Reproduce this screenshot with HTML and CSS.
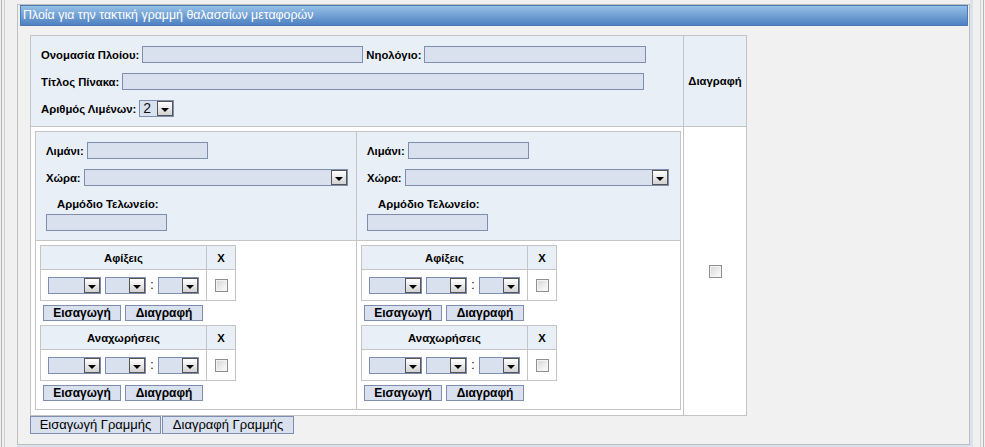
FILE: index.html
```html
<!DOCTYPE html>
<html lang="el">
<head>
  <meta charset="UTF-8" />
  <title>Πλοία τακτικής γραμμής</title>
  <link rel="stylesheet" href="styles.css">
</head>
<body>
  <div class="shell">
    <div class="shell-in">
      <div class="panel-wrap">
        <div class="panel">
          <!-- Title bar -->
          <div class="panel-title">Πλοία για την τακτική γραμμή θαλασσίων μεταφορών</div>

          <div class="panel-body">
            <table class="grid main">
              <colgroup><col class="c-form"><col class="c-del"></colgroup>
              <tr>
                <td class="form-head">
                  <div class="line">
                    <label>Ονομασία Πλοίου:</label><input class="field w-name" type="text">
                    <label class="next">Νηολόγιο:</label><input class="field w-reg" type="text">
                  </div>
                  <div class="line">
                    <label>Τίτλος Πίνακα:</label><input class="field w-title" type="text">
                  </div>
                  <div class="line">
                    <label>Αριθμός Λιμένων:</label><span class="sel w-count"><span class="val">2</span><span class="arr"></span></span>
                  </div>
                </td>
                <td class="del-head">Διαγραφή</td>
              </tr>
              <tr>
                <td class="ports-cell">
                  <table class="grid ports">
                    <colgroup><col class="c-port1"><col class="c-port2"></colgroup>
                    <tr>
                      <td class="port-info">
                        <div class="line"><label>Λιμάνι:</label><input class="field w-port" type="text"></div>
                        <div class="line"><label>Χώρα:</label><span class="sel w-country"><span class="val"></span><span class="arr"></span></span></div>
                        <div class="office">Αρμόδιο Τελωνείο:</div>
                        <input class="field w-office" type="text">
                      </td>
                      <td class="port-info">
                        <div class="line"><label>Λιμάνι:</label><input class="field w-port" type="text"></div>
                        <div class="line"><label>Χώρα:</label><span class="sel w-country"><span class="val"></span><span class="arr"></span></span></div>
                        <div class="office">Αρμόδιο Τελωνείο:</div>
                        <input class="field w-office" type="text">
                      </td>
                    </tr>
                    <tr>
                      <td class="port-times">
                        <table class="grid times">
                          <colgroup><col class="c-time"><col class="c-x"></colgroup>
                          <tr><td class="th">Αφίξεις</td><td class="th">X</td></tr>
                          <tr>
                            <td><div class="clock"><span class="sel w-day"><span class="val"></span><span class="arr"></span></span><span class="sel w-hm"><span class="val"></span><span class="arr"></span></span><span class="colon">:</span><span class="sel w-hm"><span class="val"></span><span class="arr"></span></span></div></td>
                            <td class="center"><span class="check"></span></td>
                          </tr>
                        </table>
                        <div class="btns"><button>Εισαγωγή</button><button>Διαγραφή</button></div>
                        <table class="grid times">
                          <colgroup><col class="c-time"><col class="c-x"></colgroup>
                          <tr><td class="th">Αναχωρήσεις</td><td class="th">X</td></tr>
                          <tr>
                            <td><div class="clock"><span class="sel w-day"><span class="val"></span><span class="arr"></span></span><span class="sel w-hm"><span class="val"></span><span class="arr"></span></span><span class="colon">:</span><span class="sel w-hm"><span class="val"></span><span class="arr"></span></span></div></td>
                            <td class="center"><span class="check"></span></td>
                          </tr>
                        </table>
                        <div class="btns"><button>Εισαγωγή</button><button>Διαγραφή</button></div>
                      </td>
                      <td class="port-times">
                        <table class="grid times">
                          <colgroup><col class="c-time"><col class="c-x"></colgroup>
                          <tr><td class="th">Αφίξεις</td><td class="th">X</td></tr>
                          <tr>
                            <td><div class="clock"><span class="sel w-day"><span class="val"></span><span class="arr"></span></span><span class="sel w-hm"><span class="val"></span><span class="arr"></span></span><span class="colon">:</span><span class="sel w-hm"><span class="val"></span><span class="arr"></span></span></div></td>
                            <td class="center"><span class="check"></span></td>
                          </tr>
                        </table>
                        <div class="btns"><button>Εισαγωγή</button><button>Διαγραφή</button></div>
                        <table class="grid times">
                          <colgroup><col class="c-time"><col class="c-x"></colgroup>
                          <tr><td class="th">Αναχωρήσεις</td><td class="th">X</td></tr>
                          <tr>
                            <td><div class="clock"><span class="sel w-day"><span class="val"></span><span class="arr"></span></span><span class="sel w-hm"><span class="val"></span><span class="arr"></span></span><span class="colon">:</span><span class="sel w-hm"><span class="val"></span><span class="arr"></span></span></div></td>
                            <td class="center"><span class="check"></span></td>
                          </tr>
                        </table>
                        <div class="btns"><button>Εισαγωγή</button><button>Διαγραφή</button></div>
                      </td>
                    </tr>
                  </table>
                </td>
                <td class="center"><span class="check"></span></td>
              </tr>
            </table>

            <!-- Row actions -->
            <div class="row-btns">
              <button class="wide">Εισαγωγή Γραμμής</button><button class="wide w2">Διαγραφή Γραμμής</button>
            </div>
          </div>
        </div>
      </div>
    </div>
  </div>
</body>
</html>
```

FILE: styles.css
```css
* { box-sizing: border-box; margin: 0; padding: 0; }
body {
  background: #f0f0f0;
  font-family: "Liberation Sans", Arial, sans-serif;
  font-size: 11.3px; color: #000;
  height: 447px; overflow: hidden;
}

/* —— page frame —— */
.shell {
  margin: 0 1px; height: 447px;
  border-left: 1px solid #b4b4b4; border-right: 1px solid #b4b4b4;
  padding: 0 2px;
}
.shell-in {
  height: 100%;
  border-left: 1px solid #cfcfcf; border-right: 1px solid #cfcfcf;
  padding-left: 12px;
}
.panel-wrap {
  width: 956px; padding-top: 4px;
  border-right: 3px solid #dbe2ee; border-bottom: 3px solid #dbe2ee;
}
.panel {
  height: 441px;
  border: 1px solid #bebebe;
  background: #f1f1f1;
}
.panel-title {
  margin: 0 1px 0 2px; height: 21px;
  border: 1px solid #4b79b6;
  background: linear-gradient(to bottom, #95c1e7, #4f80c1);
  color: #fff; font-size: 12.4px; line-height: 19px;
  padding-left: 2px;
}
.panel-body { padding: 9px 0 0 12px; }

/* —— tables —— */
.grid { border-collapse: collapse; table-layout: fixed; }
.grid td { border: 1px solid #c4c4c4; vertical-align: top; }
.main { width: 716px; }
.c-form { width: 653px; }
.c-del { width: 63px; }
.ports { width: 645px; }
.c-port1 { width: 321px; }
.c-port2 { width: 324px; }
.times { width: 195px; }
.c-time { width: 166px; }
.c-x { width: 29px; }

.form-head {
  background: #e9eff7;
  padding: 10px 10px 9px 10px;
}
.del-head {
  background: #e9eff7;
  font-weight: bold; text-align: center;
}
.grid td.del-head, .grid td.center { vertical-align: middle; text-align: center; }

.line { display: flex; align-items: center; height: 17px; }
.line + .line { margin-top: 10px; }
label { font-weight: bold; margin-right: 3px; white-space: nowrap; }
label.next { margin-left: 3px; }

/* —— fields —— */
.field {
  display: block; height: 17px;
  border: 1px solid #7f8eb0; background: #d9e0ee;
  outline: none;
}
.w-name { width: 221px; }
.w-reg { width: 222px; }
.w-title { width: 522px; }
.w-port { width: 121px; }
.w-office { width: 121px; margin-top: 3px; }

.sel {
  display: flex; height: 17px;
  border: 1px solid #7f8eb0; background: #d9e0ee;
}
.sel .val { flex: 1; font-size: 14px; line-height: 15px; padding-left: 3px; color: #111; }
.sel .arr {
  width: 16px; position: relative;
  border: 1px solid #555;
  background: linear-gradient(to bottom, #ffffff, #d2d2d2);
}
.sel .arr::after {
  content: ""; position: absolute;
  left: 3px; bottom: 3px;
  border-left: 4px solid transparent; border-right: 4px solid transparent;
  border-top: 4px solid #000;
}
.w-count { width: 35px; }
.w-country { width: 264px; }
.w-day { width: 53px; }
.w-hm { width: 41px; }

/* —— ports —— */
.grid td.port-info {
  background: #e9eff7;
  padding: 10px 0 9px 10px;
}
.office {
  font-weight: bold; height: 14px; line-height: 14px;
  margin-top: 11px; padding-left: 11px;
}
.grid td.port-times { background: #fff; padding: 4px 0 4px 4px; }
.grid td.ports-cell { padding: 4px 3px 5px 4px; background: #fff; }
.grid td.center { background: #fff; }

.times td { background: #fff; }
.grid td.th {
  background: #e9eff7; height: 24px;
  font-weight: bold; text-align: center; vertical-align: middle;
}
.clock {
  display: flex; align-items: center; justify-content: center;
  gap: 4px; height: 30px;
}
.colon { width: 4px; text-align: center; font-size: 12px; }

.check {
  display: inline-block; width: 13px; height: 13px; vertical-align: middle;
  border: 1px solid #8e8f8f;
  background: linear-gradient(135deg, #d5d5d5, #ffffff);
  box-shadow: inset 0 0 0 1px #f4f4f4;
}

/* —— buttons —— */
button {
  height: 16px; padding: 0;
  border: 1px solid #7f8eb0; background: #d9e0ee;
  font-family: inherit; font-size: 12px; font-weight: bold; color: #000;
  line-height: 14px;
}
.btns { display: flex; gap: 4px; margin: 4px 0 4px 3px; }
.btns button { width: 78px; }
.row-btns { display: flex; gap: 1px; }
button.wide { width: 131px; height: 18px; font-weight: normal; font-size: 13px; }
button.w2 { width: 132px; }
```
